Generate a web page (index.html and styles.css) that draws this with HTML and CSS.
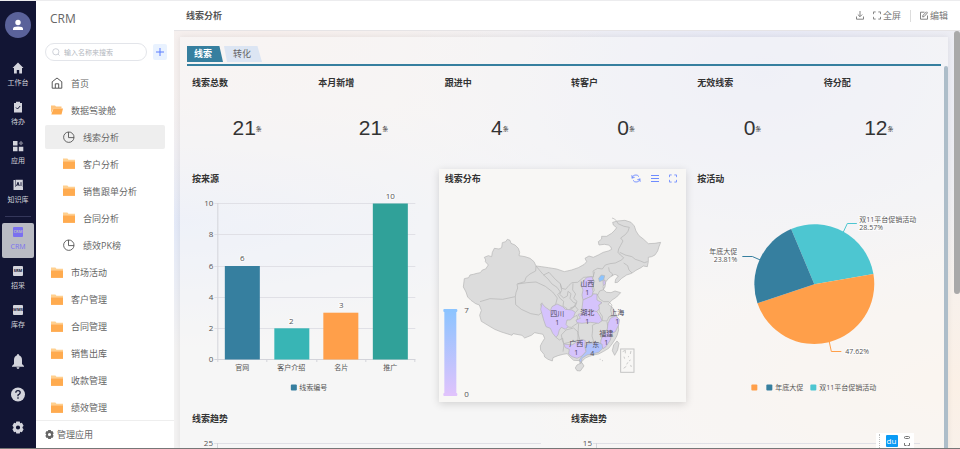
FILE: index.html
```
<!DOCTYPE html>
<html lang="zh-CN">
<head>
    <meta charset="UTF-8">
    <meta name="viewport" content="width=device-width, initial-scale=1.0">
    <title>CRM - 线索分析</title>
    <link rel="stylesheet" href="styles.css">
</head>
<body>

<!-- 图标 -->
<svg class="sprite" aria-hidden="true">
    <symbol id="folder" viewBox="0 0 11 10">
        <path d="M0 0h4l1 1h6v1.500H0z" fill="#ffd08f"/>
        <path d="M0 2.500h11V9.500H0z" fill="#ffab4f"/>
    </symbol>
    <symbol id="folder-open" viewBox="0 0 12 10">
        <path d="M0 .5h4l1 1h5.500v2H2.500L0 8z" fill="#ffc47d"/>
        <path d="M2.500 3.500H12L10.500 9.500H.3z" fill="#ffab4f"/>
    </symbol>
    <symbol id="pie" viewBox="0 0 12 12">
        <path d="M5.500 1A5.200 5.200 0 1 0 11 6.600H5.500z" fill="none" stroke="#555" stroke-width=".9"/>
        <path d="M5.500 1A5.200 5.200 0 0 1 11 6.600" fill="none" stroke="#555" stroke-width=".9"/>
    </symbol>
    <symbol id="gear" viewBox="0 0 12 12">
        <path fill-rule="evenodd" d="M4.300 0h3.400l.5 1.700 1.700-.4L11.600 4.200 10.500 5.500v1l1.100 1.300-1.700 2.900-1.700-.4L7.700 12H4.300l-.5-1.700-1.700.4L.4 7.800 1.500 6.500v-1L.4 4.200 2.100 1.300l1.700.4zM6 3.900a2.100 2.100 0 1 0 0 4.200 2.100 2.100 0 0 0 0-4.200z" fill="currentColor"/>
    </symbol>
    <symbol id="full" viewBox="0 0 9 9">
        <path d="M.5 3V.5H3M6 .5h2.500V3M8.500 6v2.500H6M3 8.500H.5V6" fill="none" stroke="currentColor"/>
    </symbol>
</svg>

<div class="app">
    <nav class="rail">
        <a href="#" class="avatar" aria-label="个人中心">
            <svg width="12" height="12" viewBox="0 0 12 12"><circle cx="6" cy="3.500" r="2.700" fill="#fff"/><path d="M1 11V9.500Q1 7.500 6 7.500T11 9.500V11z" fill="#fff"/></svg>
        </a>
        <a href="#" class="rail-item">
            <svg viewBox="0 0 12 12"><path d="M6 .5L11.500 6H10v5.500H7.200V8H4.800v3.500H2V6H.5z"/></svg>
            <span>工作台</span>
        </a>
        <a href="#" class="rail-item">
            <svg viewBox="0 0 12 12"><path d="M2 2h2V.8h4V2h2v9.500H2z"/><path d="M4 6.500l1.500 1.500L8.200 5" fill="none" stroke="#121534"/></svg>
            <span>待办</span>
        </a>
        <a href="#" class="rail-item">
            <svg viewBox="0 0 12 12"><path d="M1 1h4.500v4.500H1zM1 6.700h4.500v4.500H1zM6.800 6.700h4.500v4.500H6.800z"/><path d="M9 .8l2.300 2.400L9 5.600 6.700 3.200z" opacity=".5"/></svg>
            <span>应用</span>
        </a>
        <a href="#" class="rail-item">
            <svg viewBox="0 0 12 12"><path d="M1.500 1h1.500v7h8V11H1.500zM3.500 .8H10.800V8H3.500z"/><path d="M4.500 7l1.500-3.800L7.300 7M5 5.800h2M9 3.200V7" fill="none" stroke="#121534" stroke-width=".9"/></svg>
            <span>知识库</span>
        </a>
        <hr>
        <a href="#" class="rail-item active">
            <svg viewBox="0 0 12 12"><rect x="1" y="1" width="10" height="10" rx="1"/><text x="6" y="7">CRM</text></svg>
            <span>CRM</span>
        </a>
        <a href="#" class="rail-item">
            <svg viewBox="0 0 12 12"><rect x="1" y="1" width="10" height="10" rx="1"/><text x="6" y="7">SRM</text></svg>
            <span>招采</span>
        </a>
        <a href="#" class="rail-item">
            <svg viewBox="0 0 12 12"><rect x="1" y="1" width="10" height="10" rx="1"/><text x="6" y="7">WMS</text></svg>
            <span>库存</span>
        </a>
        <div class="rail-tools">
            <a href="#" aria-label="通知"><svg width="12" height="15" viewBox="0 0 12 15"><path d="M6 0q1 0 1 1.200Q10 2.200 10 6v4l2 2v.8H0V12l2-2V6Q2 2.200 5 1.200 5 0 6 0zM4.500 13.300h3Q7.300 15 6 15T4.500 13.300z" fill="currentColor"/></svg></a>
            <a href="#" aria-label="帮助"><svg width="14" height="15" viewBox="0 0 14 15"><circle cx="7" cy="7.500" r="7" fill="currentColor"/><path d="M4.800 5.800Q4.800 3.700 7 3.700t2.200 2Q9.200 7 7 8v1.200M7 10.300v1.400" fill="none" stroke="#121534" stroke-width="1.300"/></svg></a>
            <a href="#" aria-label="设置"><svg width="12" height="15"><use href="#gear"/></svg></a>
        </div>
    </nav>

    <aside class="sidebar">
        <h1>CRM</h1>
        <div class="search-row">
            <div class="search">
                <svg width="8" height="8" viewBox="0 0 8 8"><circle cx="3.800" cy="3.800" r="3.100" fill="none" stroke="#c3c7cf" stroke-width=".8"/><path d="M6 6l1.600 1.600" stroke="#c3c7cf" stroke-width=".8"/></svg>
                <input type="text" placeholder="输入名称来搜索" aria-label="输入名称来搜索">
            </div>
            <button class="add" aria-label="新增"><svg width="8" height="8" viewBox="0 0 8 8"><path d="M4 0v8M0 4h8" stroke="#5b7cff"/></svg></button>
        </div>
        <ul class="menu">
            <li><a href="#"><svg viewBox="0 0 12 12"><path d="M1.200 4.800L6 1l4.800 3.800v6.400H1.200zM4.300 11V6.800h3.400V11" fill="none" stroke="#444" stroke-width=".9"/></svg>首页</a></li>
            <li><a href="#"><svg><use href="#folder-open"/></svg>数据驾驶舱</a></li>
            <li class="sub active"><a href="#"><svg><use href="#pie"/></svg>线索分析</a></li>
            <li class="sub"><a href="#"><svg><use href="#folder"/></svg>客户分析</a></li>
            <li class="sub"><a href="#"><svg><use href="#folder"/></svg>销售跟单分析</a></li>
            <li class="sub"><a href="#"><svg><use href="#folder"/></svg>合同分析</a></li>
            <li class="sub"><a href="#"><svg><use href="#pie"/></svg>绩效PK榜</a></li>
            <li><a href="#"><svg><use href="#folder"/></svg>市场活动</a></li>
            <li><a href="#"><svg><use href="#folder"/></svg>客户管理</a></li>
            <li><a href="#"><svg><use href="#folder"/></svg>合同管理</a></li>
            <li><a href="#"><svg><use href="#folder"/></svg>销售出库</a></li>
            <li><a href="#"><svg><use href="#folder"/></svg>收款管理</a></li>
            <li><a href="#"><svg><use href="#folder"/></svg>绩效管理</a></li>
        </ul>
        <a href="#" class="manage"><svg width="9" height="9"><use href="#gear"/></svg>管理应用</a>
    </aside>

    <main>
        <header>
            <h2>线索分析</h2>
            <div class="actions">
                <button aria-label="下载"><svg width="8" height="9" viewBox="0 0 8 9"><path d="M4 0v5.500M1.800 3.500L4 5.700l2.200-2.200M.5 5.500v2.700h7V5.500" fill="none" stroke="currentColor" stroke-width=".9"/></svg></button>
                <button><svg width="8" height="9"><use href="#full"/></svg>全屏</button>
                <button class="edit"><svg width="8" height="9" viewBox="0 0 8 9"><path d="M4.500 1.200H.5v7h7V4.500M2.700 6l.3-1.700L6.500.8l1 1L4.200 5.500z" fill="none" stroke="currentColor" stroke-width=".9"/></svg>编辑</button>
            </div>
        </header>

        <div class="stage">
            <div class="panel">
                <div class="tabs">
                    <button class="tab active">线索</button>
                    <button class="tab">转化</button>
                </div>

                <div class="board">
                    <div class="widgets">
                        <section class="stat"><h3>线索总数</h3><p>21<small>条</small></p></section>
                        <section class="stat"><h3>本月新增</h3><p>21<small>条</small></p></section>
                        <section class="stat"><h3>跟进中</h3><p>4<small>条</small></p></section>
                        <section class="stat"><h3>转客户</h3><p>0<small>条</small></p></section>
                        <section class="stat"><h3>无效线索</h3><p>0<small>条</small></p></section>
                        <section class="stat"><h3>待分配</h3><p>12<small>条</small></p></section>

                        <!-- 按来源 -->
                        <section class="card">
                            <h3>按来源</h3>
                            <svg class="chart" viewBox="0 0 247 213">
                                <path class="grid-line" d="M28 14.500H229M28 45.500H229M28 77.500H229M28 108.500H229M28 139.500H229"/>
                                <path class="axis" d="M31.500 14V173M28 170.500H229M80.500 170v3M130.500 170v3M179.500 170v3M228.500 170v3"/>
                                <g class="end num">
                                    <text x="27" y="17">10</text>
                                    <text x="27" y="48">8</text>
                                    <text x="27" y="80">6</text>
                                    <text x="27" y="111">4</text>
                                    <text x="27" y="142">2</text>
                                    <text x="27" y="173">0</text>
                                </g>
                                <rect x="38.500" y="77" width="35" height="93.500" fill="#367f9f"/>
                                <rect x="88" y="139.300" width="35" height="31.200" fill="#38b5b5"/>
                                <rect x="137" y="123.700" width="35" height="46.800" fill="#ff9f4a"/>
                                <rect x="186.500" y="14.500" width="35" height="156" fill="#30a199"/>
                                <g class="middle num halo">
                                    <text x="56" y="72">6</text>
                                    <text x="105" y="135">2</text>
                                    <text x="155" y="119">3</text>
                                    <text x="204" y="10">10</text>
                                </g>
                                <g class="middle">
                                    <text x="56" y="181">官网</text>
                                    <text x="105" y="181">客户介绍</text>
                                    <text x="155" y="181">名片</text>
                                    <text x="204" y="181">推广</text>
                                </g>
                                <rect x="104.500" y="195.500" width="6" height="6" rx="1" fill="#367f9f"/>
                                <text x="113" y="201">线索编号</text>
                            </svg>
                        </section>

                        <!-- 线索分布 -->
                        <section class="card raised">
                            <h3>线索分布</h3>
                            <div class="card-tools">
                                <button aria-label="刷新"><svg width="10" height="9" viewBox="0 0 10 9"><path d="M1 4.500A3.800 3.800 0 0 1 8 2.700M9 4.500A3.800 3.800 0 0 1 2 6.300M.8 1.200l.4 2.800 2.500-.7M9.200 7.800L8.800 5l-2.500.7" fill="none" stroke="currentColor" stroke-width=".9"/></svg></button>
                                <button aria-label="明细"><svg width="8" height="9" viewBox="0 0 8 9"><path d="M0 1.500h8M0 4.500h8M0 7.500h8" stroke="currentColor"/></svg></button>
                                <button aria-label="全屏"><svg width="8" height="9"><use href="#full"/></svg></button>
                            </div>
                            <svg class="chart" viewBox="0 0 247 213">
                                <defs>
                                    <linearGradient id="range" x2="0" y2="1">
                                        <stop offset="0" stop-color="#8cc4ff"/>
                                        <stop offset="1" stop-color="#e0c3fc"/>
                                    </linearGradient>
                                </defs>
                                <g class="map" transform="translate(-4 -24) scale(.3333)">
                                    <path d="M87 341l13-3 4-8 10-2 11-3 10-2 6-8 10-3 8-12-9-10 1-5-4-8 12-5 10 3 2-13 6-12 14 2 8-4 2-15 10-3 5-7 8 3 3 9 12 5 10 10 4 12-2 10 18 3 15 5 12 10 6 13 17 2 20 3 25 4 23 8 22-5 20-7 18-10 7-8-5-10 12-7 13 4 15-7 15-8 15-4 10-5-3-8-7-5-12-2-16 2-2-10 10-8v-8l15 0 15-9 10-10 5-7-10-8-2-8 15-4 22-2 18 6 10 11 5 15 9 14 13 10 15 14 20-1 17-3-5 13-4 13-8 12-10 5-10 2v13l-3 15-12-2-7 5-15 8-13 9-15 5-15 10-12 12-8 1 2-10 8-10-10-5-10 5-10 8-8 10-2 15-5 8 10 8 13 1 12-5 17 5-12 13-15 10-10 12 13 10 7 13 6 14 6 10-2 15 1 15-5 17-7 13-8 12-10 13-15 9-15 8-15 3-13 4-12 5-10 10-5 12-2-14-18-1-12-11-7-9-13 2-15 4-15 6-2 10-13-5-10-7-2-8-10-12-1-13 5-10 8-13-5-12-10-2-15-3-10 8-20 8-8-8-27-5-3 5-32-10-20-8-20-12-20-12-5-18 5-15-6-16-11-4-14-10-10-10-5-15-8-15z"/>
                                    <path class="border" d="M134 410l30-9 38 2 38-8 2-12 5-14-2-12 23-7 4-13 12-10 17-9 1-15 21 25 15 14 12 15 15 10 10 14-8 8 8 12 10 8-2 14 12 8-4 14M240 395l1 24 17 14 28 13 24 4 12-10-6-22 4-5M248 357l27-4 27-2 28 13 22 17 14 18-5 19-11 10M325 330l16-8 20 22 14 12 4 14 12 3 10-12 9-8 17-1 18-15 30-2-2-17 14-8 14 2 9-12 14-4 16-2 19-9 6-7-10-8-7-8 2-10 6-11 7-13-7-9 14-10 8-10 4-12-16-3-18-8-3-6-7-8-8-3M553 262l17 8 20 5 10 8 15 5 12 5 10-3M565 294l12 8 4 13 9 9M520 307l2 12 10 8-3 8M375 356l4 20-6 12 12 11 11-6 2-14 9 7-3 14 10 12 8 3-9 14-13 5M413 355l-1 20 9 12-6 13 10 9-5 15-15 5M478 320l-6 20 6 10-5 10 4 16-8 10 18 4 6-12 12-4-2-10M485 387l8 15 12 8 15 0 10 10-4 16 4 15M500 412l-10 10 2 18 9 14 0 13 14 1 6-13 19-2M501 466l-30 15 1 14-2 18 5 17M515 470l3 20-13 17-8 20M430 475l-2 30 7 25 20 5 20-5 20 5M378 510l14-15 23-6 13 12 0 24-18 5-25 6-4-10zM395 465l15-6 15-8 4 22-12 8-8 6-14-1M362 517l10 8 10-5 4 20-3 20M420 424l8 10-7 8"/>
                                    <path class="low" d="M320 415l8 10 17 12 5-12 15-8 17 8 8 8 20 2 10 7-5 13-10 10h-10l-3 13 6 7-8 8-12-6-6 8-4 15-6 7-10-12-7-15-13-5-7-20-9-32z"/>
                                    <path class="low" d="M455 337l15-2 5 15-5 15 3 15-3 13-27 12-3-15 3-15-6-15 8-13z"/>
                                    <path class="low" d="M443 405l27-12 3-6 12 0v18l15 8-10 7 2 10-7 10 10 15 5 12-10 8-25-3-25 3-15-2-3-8 13-5-7-12 12-3 0-15z"/>
                                    <path class="border" d="M441 432l29 5 15 3"/>
                                    <path class="low" d="M518 475l7-15 15-7 12 10-2 17-10 20-10 5-5 20-13 20-9 6-8-11 2-15 6-15 12-10z"/>
                                    <path class="low" d="M385 537l25 3 15-10 15-7 10 4-2 18 4 15-12 13-15 7-15-5-10-8 2-14-12-5z"/>
                                    <path class="mid" d="M450 540l15-5 20-2 15 4 2 13-12 12-20 5-15 3-15 10-2 15-6-10 8-12 12-13z"/>
                                    <path class="high" d="M490 340l8-10 10 2-3 13-13 5z"/>
                                    <path class="low" d="M503 348l6-3 1 12-6 5z"/>
                                    <path d="M545 528l6 7-4 20-9 16-7-14 4-17zM425 600l15-7 6 10-11 15-10-1-5-8z"/>
                                    <rect class="inset" x="556" y="552" width="40" height="70"/>
                                    <path class="border" d="M562 560l8-4 0 9M587 558l-2 9M565 610l8-6M574 598l4-6M581 588l5-3M586 600l2 6M493 583l3 0M500 587l3 0M566 575l2 6M578 575l3 0"/>
                                </g>
                                <g class="middle map-label">
                                    <text x="148" y="97">山西</text><text x="148" y="106">1</text>
                                    <text x="118" y="127">四川</text><text x="118" y="136">1</text>
                                    <text x="148" y="126">湖北</text><text x="148" y="135">1</text>
                                    <text x="178" y="126">上海</text><text x="178" y="135">1</text>
                                    <text x="167" y="147">福建</text><text x="167" y="156">1</text>
                                    <text x="137" y="157">广西</text><text x="137" y="166">1</text>
                                    <text x="153" y="158">广东</text><text x="153" y="167">4</text>
                                </g>
                                <rect x="5" y="121" width="12" height="86" fill="url(#range)"/>
                                <rect x="4" y="120" width="14" height="3" rx="1" fill="#8cc4ff"/>
                                <rect x="4" y="204" width="14" height="3" rx="1" fill="#e0c3fc"/>
                                <g class="num">
                                    <text x="25" y="124">7</text>
                                    <text x="25" y="208">0</text>
                                </g>
                            </svg>
                        </section>

                        <!-- 按活动 -->
                        <section class="card">
                            <h3>按活动</h3>
                            <svg class="chart" viewBox="0 0 247 213">
                                <path d="M123 95.300L99.800 39.900A60 60 0 0 1 182.100 85z" fill="#4dc6d1"/>
                                <path d="M123 95.300L182.100 85A60 60 0 0 1 66.100 114.200z" fill="#ff9f4a"/>
                                <path d="M123 95.300L66.100 114.200A60 60 0 0 1 99.800 39.900z" fill="#367f9f"/>
                                <g fill="none">
                                    <path d="M152 43l4-8.500h9.500" stroke="#4dc6d1"/>
                                    <path d="M69 71l-8-3.500H51" stroke="#367f9f"/>
                                    <path d="M138 153l2 9.500h10" stroke="#ff9f4a"/>
                                </g>
                                <g class="halo">
                                    <text x="168" y="33">双11平台促销活动</text>
                                    <text x="168" y="41">28.57%</text>
                                    <text x="154" y="165">47.62%</text>
                                </g>
                                <g class="end halo">
                                    <text x="46" y="65">年底大促</text>
                                    <text x="46" y="73">23.81%</text>
                                </g>
                                <rect x="60" y="195.500" width="6" height="6" rx="1" fill="#ff9f4a"/>
                                <rect x="75" y="195.500" width="6" height="6" rx="1" fill="#367f9f"/>
                                <text x="84" y="201">年底大促</text>
                                <rect x="119" y="195.500" width="6" height="6" rx="1" fill="#4dc6d1"/>
                                <text x="128" y="201">双11平台促销活动</text>
                            </svg>
                        </section>

                        <!-- 线索趋势 -->
                        <section class="trend">
                            <h3>线索趋势</h3>
                            <svg class="chart" viewBox="0 0 373 213">
                                <path class="grid-line" d="M28 14.500H355"/>
                                <path class="axis" d="M31.500 14V173"/>
                                <text class="end num" x="27" y="17">25</text>
                            </svg>
                        </section>
                        <section class="trend">
                            <h3>线索趋势</h3>
                            <svg class="chart" viewBox="0 0 373 213">
                                <path class="grid-line" d="M28 14.500H355"/>
                                <path class="axis" d="M31.500 14V173"/>
                                <text class="end num" x="27" y="17">15</text>
                            </svg>
                        </section>
                    </div>
                    <div class="board-scroll"></div>
                </div>
            </div>
            <div class="page-scroll"></div>
        </div>
    </main>
</div>

<!-- 输入法悬浮条 -->
<div class="ime">
    <span class="ime-grip"></span>
    <span class="ime-logo">du</span>
    <svg width="8" height="15" viewBox="0 0 8 15"><path d="M2.500 3.500h3L7 4.500 5.500 5.500h-3L1 4.500zM1.500 10v2.500h2M6.500 10v2.500h-2" fill="none" stroke="#777"/></svg>
</div>

</body>
</html>
```
FILE: styles.css
```
* {
    margin: 0;
    padding: 0;
    box-sizing: border-box;
}

body {
    font-family: "Open Sans", "Noto Sans CJK SC", sans-serif;
    font-size: 9px;
    color: #666;
    background-color: #fff;
}

a {
    color: inherit;
    text-decoration: none;
}

button {
    font: inherit;
    color: inherit;
    background: none;
    border: none;
    cursor: pointer;
}

svg {
    display: block;
    flex: none;
}

.sprite {
    position: absolute;
    width: 0;
    height: 0;
}

.app {
    display: flex;
    height: 100vh;
    overflow: hidden;
    border-top: 1px solid #ececee;
    border-bottom: 1px solid #777;
}

/* 左侧导航栏 */
.rail {
    width: 36px;
    flex: none;
    display: flex;
    flex-direction: column;
    align-items: center;
    padding-top: 11px;
    background-color: #121534;
    color: #d3d4dc;
}

.avatar {
    display: flex;
    align-items: center;
    justify-content: center;
    width: 26px;
    height: 26px;
    margin-bottom: 21px;
    border-radius: 50%;
    background-color: #5a629a;
}

.rail-item {
    display: flex;
    flex-direction: column;
    align-items: center;
    gap: 4px;
    width: 32px;
    height: 35px;
    margin-bottom: 4px;
    padding-top: 3px;
    font-size: 7px;
    line-height: 10px;
    border-radius: 2px;
    white-space: nowrap;
}

.rail-item svg {
    width: 12px;
    height: 12px;
    fill: #d3d4dc;
}

.rail-item text {
    font-size: 4px;
    font-weight: bold;
    text-anchor: middle;
    fill: #121534;
}

.rail-item.active {
    background-color: #b9bbc4;
    color: #7a70f0;
}

.rail-item.active svg {
    fill: #7a70f0;
}

.rail-item.active text {
    fill: #b9bbc4;
}

.rail hr {
    width: 26px;
    margin: 1px 0 6px;
    border: none;
    border-top: 1px solid #34375a;
}

.rail-tools {
    display: flex;
    flex-direction: column;
    align-items: center;
    gap: 18px;
    margin-top: auto;
    padding-bottom: 13px;
}

/* 菜单 */
.sidebar {
    width: 138px;
    flex: none;
    display: flex;
    flex-direction: column;
    background-color: #fff;
}

.sidebar h1 {
    padding: 9px 14px 0;
    font-size: 12px;
    font-weight: normal;
    line-height: 18px;
}

.search-row {
    display: flex;
    align-items: center;
    gap: 6px;
    margin: 15px 7px 10px 9px;
}

.search {
    flex: 1;
    min-width: 0;
    display: flex;
    align-items: center;
    gap: 4px;
    height: 18px;
    padding: 0 6px;
    border: 1px solid #e3e5ea;
    border-radius: 9px;
}

.search input {
    width: 100%;
    min-width: 0;
    font: inherit;
    font-size: 7px;
    border: none;
    outline: none;
    background: none;
}

.search input::placeholder {
    color: #b4b8c0;
}

.add {
    display: flex;
    align-items: center;
    justify-content: center;
    width: 14px;
    height: 16px;
    border-radius: 2px;
    background-color: #e9f2ff;
}

.menu {
    flex: 1;
    display: flex;
    flex-direction: column;
    justify-content: space-between;
    padding: 0 9px;
    list-style: none;
}

.menu a {
    display: flex;
    align-items: center;
    gap: 8px;
    height: 24px;
    padding-left: 6px;
    border-radius: 2px;
}

.menu svg {
    width: 12px;
    height: 12px;
}

.menu .sub a {
    padding-left: 18px;
}

.menu .active a {
    background-color: #eee;
}

.manage {
    display: flex;
    align-items: center;
    gap: 3px;
    height: 28px;
    padding-left: 9px;
    border-top: 1px solid #eee;
}

/* 主区域 */
main {
    flex: 1;
    min-width: 0;
    display: flex;
    flex-direction: column;
}

header {
    flex: none;
    display: flex;
    align-items: center;
    justify-content: space-between;
    height: 30px;
    padding: 0 12px;
    background-color: #fff;
    border-bottom: 1px solid #e6e4e6;
}

header h2 {
    font-size: 9px;
    color: #555;
}

.actions {
    display: flex;
    align-items: center;
    gap: 9px;
    color: #777;
}

.actions button {
    display: flex;
    align-items: center;
    gap: 2px;
    height: 12px;
}

.actions .edit {
    padding-left: 9px;
    border-left: 1px solid #ddd;
}

.stage {
    flex: 1;
    min-height: 0;
    display: flex;
    padding: 6px 0 0 6px;
    background:
        radial-gradient(ellipse at 12% 0, #f6eeec 0, transparent 35%),
        radial-gradient(ellipse at 75% 10%, #e5e7f5 0, transparent 45%),
        radial-gradient(ellipse at 0 45%, #e3e9f8 0, transparent 40%),
        radial-gradient(ellipse at 100% 85%, #fbf0e6 0, transparent 40%),
        #f3f2f2;
}

.panel {
    flex: 1;
    min-width: 0;
    display: flex;
    flex-direction: column;
    padding-left: 6px;
    background-color: rgba(250, 250, 250, 0.5);
    box-shadow: 0 0 6px rgba(0, 0, 0, 0.08);
}

.tabs {
    display: flex;
    gap: 1px;
    margin: 9px 7px 0 1px;
    padding-bottom: 2px;
    border-bottom: 2px solid #367f9f;
}

.tab {
    width: 38px;
    height: 16px;
    padding-right: 2px;
    line-height: 16px;
    background-color: #dce5f3;
    clip-path: polygon(0 0, 88% 0, 100% 100%, 8% 100%);
}

.tab.active {
    width: 36px;
    padding-right: 4px;
    color: #fff;
    font-weight: bold;
    background-color: #367f9f;
    clip-path: polygon(0 0, 90% 0, 100% 100%, 0 100%);
}

.board {
    flex: 1;
    min-height: 0;
    display: flex;
}

.widgets {
    flex: 1;
    min-width: 0;
    display: grid;
    grid-template-columns: repeat(6, 1fr);
    grid-template-rows: 96px 240px 240px;
    padding-top: 6px;
    overflow: hidden;
}

.widgets h3 {
    padding-left: 6px;
    font-size: 9px;
    line-height: 20px;
    color: #333;
}

.stat {
    padding-top: 1px;
}

.stat p {
    display: flex;
    align-items: center;
    justify-content: center;
    height: 70px;
    padding-right: 4px;
    font-family: "Liberation Sans", "Noto Sans CJK SC", sans-serif;
    font-size: 21px;
    color: #333;
}

.stat small {
    font-size: 6px;
}

.card {
    position: relative;
    grid-column: span 2;
    height: 233px;
    margin: 1px 5px 0 0;
}

.card.raised {
    background-color: #f8f7f5;
    box-shadow: 0 2px 8px rgba(0, 0, 0, 0.15);
}

.card-tools {
    position: absolute;
    top: 5px;
    right: 9px;
    display: flex;
    gap: 10px;
    color: #6f8cff;
}

.trend {
    grid-column: span 3;
    padding: 1px 6px 0 0;
}

/* 图表 */
.chart {
    width: 100%;
    height: 213px;
    font-size: 7px;
    fill: #555;
}

.num {
    font-size: 8px;
}

.halo {
    stroke: rgba(255, 255, 255, 0.7);
    stroke-width: 2px;
    paint-order: stroke;
}

.grid-line {
    stroke: #e0e0e6;
}

.axis {
    fill: none;
    stroke: #d3d4da;
}

.end {
    text-anchor: end;
}

.middle {
    text-anchor: middle;
}

.map path {
    fill: #dcdcdc;
    stroke: #b4b4b4;
    stroke-width: 2;
    stroke-linejoin: round;
}

.map .border {
    fill: none;
}

.map .low {
    fill: #d5c3fc;
}

.map .mid {
    fill: #b0c3fd;
}

.map .high {
    fill: #8cc4ff;
}

.map .inset {
    fill: none;
    stroke: #c4c4c4;
    stroke-width: 3;
}

.map-label {
    fill: #4c4a5c;
}

/* 滚动条 */
.board-scroll {
    width: 4px;
    border-radius: 2px 2px 0 0;
    background-color: #adbdc9;
}

.page-scroll {
    width: 6px;
    height: 263px;
    margin: -6px 0 0 6px;
    border-radius: 3px;
    background-color: #a9a9a9;
}

.ime {
    position: absolute;
    right: 46px;
    bottom: 1px;
    display: flex;
    align-items: center;
    justify-content: space-between;
    width: 38px;
    height: 15px;
    padding: 0 3px;
    background-color: #fff;
}

.ime-grip {
    height: 14px;
    border-left: 1px dotted #bbb;
}

.ime-logo {
    width: 12px;
    height: 12px;
    font-size: 8px;
    line-height: 11px;
    text-align: center;
    color: #fff;
    background-color: #0a9bf5;
    border-radius: 1px;
}
```
